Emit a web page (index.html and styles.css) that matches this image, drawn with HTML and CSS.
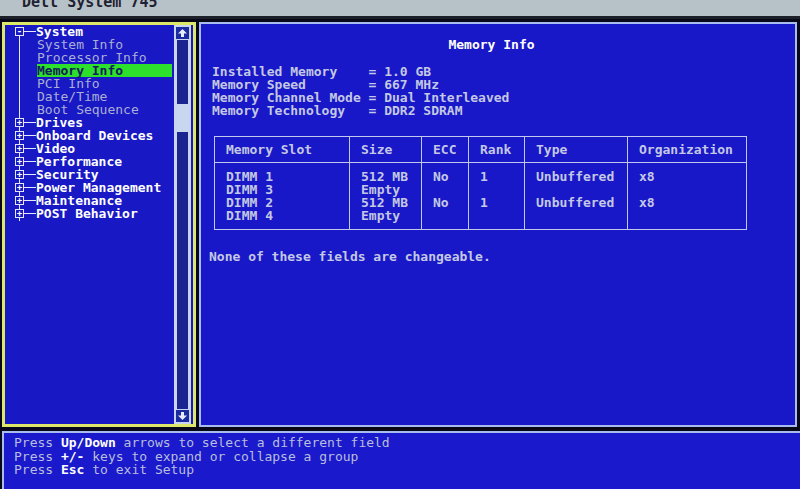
FILE: index.html
```html
<!DOCTYPE html>
<html lang="en">
<head>
    <meta charset="UTF-8">
    <title>Dell System 745 Setup</title>
    <link rel="stylesheet" href="styles.css">
</head>
<body>

<div class="titlebar"><span>Dell System 745</span></div>

<div class="main">
    <div class="left-panel">
        <ul class="tree">
            <li class="group"><span class="box">-</span><b>System</b></li>
            <li class="item"><span>System Info</span></li>
            <li class="item"><span>Processor Info</span></li>
            <li class="item selected"><span>Memory Info</span></li>
            <li class="item"><span>PCI Info</span></li>
            <li class="item"><span>Date/Time</span></li>
            <li class="item"><span>Boot Sequence</span></li>
            <li class="group"><span class="box">+</span><b>Drives</b></li>
            <li class="group"><span class="box">+</span><b>Onboard Devices</b></li>
            <li class="group"><span class="box">+</span><b>Video</b></li>
            <li class="group"><span class="box">+</span><b>Performance</b></li>
            <li class="group"><span class="box">+</span><b>Security</b></li>
            <li class="group"><span class="box">+</span><b>Power Management</b></li>
            <li class="group"><span class="box">+</span><b>Maintenance</b></li>
            <li class="group"><span class="box">+</span><b>POST Behavior</b></li>
        </ul>
        <div class="scrollbar">
            <div class="arrow">
                <svg width="11" height="10" viewBox="0 0 11 10"><path d="M5.5 1 L10 5.5 H7 V9 H4 V5.5 H1 Z" fill="#e8ecff"/></svg>
            </div>
            <div class="track">
                <div class="thumb"></div>
            </div>
            <div class="arrow">
                <svg width="11" height="10" viewBox="0 0 11 10"><path d="M5.5 9 L10 4.5 H7 V1 H4 V4.5 H1 Z" fill="#e8ecff"/></svg>
            </div>
        </div>
    </div>

    <div class="right-panel">
        <h1>Memory Info</h1>
        <pre class="info">Installed Memory    = 1.0 GB
Memory Speed        = 667 MHz
Memory Channel Mode = Dual Interleaved
Memory Technology   = DDR2 SDRAM</pre>

        <table class="slots">
            <tr>
                <th class="c-slot">Memory Slot</th>
                <th class="c-size">Size</th>
                <th class="c-ecc">ECC</th>
                <th class="c-rank">Rank</th>
                <th class="c-type">Type</th>
                <th class="c-org">Organization</th>
            </tr>
            <tr>
                <td>DIMM 1<br>DIMM 3<br>DIMM 2<br>DIMM 4</td>
                <td>512 MB<br>Empty<br>512 MB<br>Empty</td>
                <td>No<br><br>No<br>&nbsp;</td>
                <td>1<br><br>1<br>&nbsp;</td>
                <td>Unbuffered<br><br>Unbuffered<br>&nbsp;</td>
                <td>x8<br><br>x8<br>&nbsp;</td>
            </tr>
        </table>

        <p class="note">None of these fields are changeable.</p>
    </div>
</div>

<div class="help">
    <div>Press <b>Up/Down</b> arrows to select a different field</div>
    <div>Press <b>+/-</b> keys to expand or collapse a group</div>
    <div>Press <b>Esc</b> to exit Setup</div>
</div>

</body>
</html>
```

FILE: styles.css
```css
body {
    margin: 0;
    background: #080818;
    font-family: "DejaVu Sans Mono", "Liberation Mono", monospace;
    font-size: 13px;
    line-height: 13px;
    font-weight: bold;
    color: #c4c8e4;
    overflow: hidden;
}
.titlebar {
    height: 16px;
    background: #b7c1c8;
    border-bottom: 3px solid #1c2028;
    overflow: hidden;
    padding-left: 22px;
}
.titlebar span {
    display: block;
    margin-top: -5px;
    font-size: 15px;
    line-height: 15px;
    color: #1e2230;
}
.main {
    display: flex;
    gap: 3px;
    margin: 3px 3px 0 2px;
    height: 405px;
}
.left-panel {
    width: 188px;
    border: 3px solid #dde86a;
    background: #1818c4;
    display: flex;
    justify-content: space-between;
}
.tree {
    list-style: none;
    margin: 0;
    padding: 0 0 0 10px;
    position: relative;
}
.tree::before {
    content: "";
    position: absolute;
    left: 14px;
    top: 6px;
    height: 190px;
    border-left: 1px solid #e4e8ff;
}
.tree li {
    height: 13px;
    white-space: pre;
}
.group {
    display: flex;
    align-items: center;
    color: #ffffff;
}
.box {
    position: relative;
    width: 7px;
    height: 7px;
    border: 1px solid #e4e8ff;
    background: #1818c4;
    color: #ffffff;
    font-size: 9px;
    line-height: 7px;
    text-align: center;
    margin-right: 12px;
}
.box::after {
    content: "";
    position: absolute;
    left: 8px;
    top: 3px;
    width: 12px;
    border-top: 1px solid #e4e8ff;
}
.item {
    padding-left: 22px;
    color: #aab0d4;
    font-weight: normal;
}
.item span {
    display: block;
    width: 135px;
}
.item.selected span {
    background: #2ce02c;
    color: #10205a;
    font-weight: bold;
}
.scrollbar {
    width: 15px;
    margin: 0 2px 0 0;
    border: 1px solid #c8d4f0;
    display: flex;
    flex-direction: column;
}
.arrow {
    height: 12px;
    display: flex;
    align-items: center;
    justify-content: center;
    border: 1px solid #c8d4f0;
    background: #1b2ba0;
}
.track {
    flex: 1;
    background: #1a2590;
    border-left: 2px solid #c8d4f0;
    border-right: 2px solid #c8d4f0;
    padding-top: 64px;
}
.thumb {
    height: 28px;
    background: #c8d6f0;
}
.right-panel {
    flex: 1;
    border: 2px solid #a8bcf0;
    background: #1818c8;
    padding: 0 0 0 11px;
}
h1 {
    margin: 14px 0 14px 0;
    padding-right: 24px;
    font-size: 13px;
    line-height: 13px;
    text-align: center;
    color: #ffffff;
}
.info {
    margin: 0;
    font: inherit;
    color: #c4c8e4;
}
.slots {
    margin: 19px 0 0 2px;
    border-collapse: collapse;
    border: 1px solid #c0c8f0;
}
.slots th, .slots td {
    border: 1px solid #c0c8f0;
    text-align: left;
    padding: 0 0 0 11px;
    font-weight: bold;
    vertical-align: top;
    color: #c4c8e4;
}
.slots th {
    height: 25px;
    vertical-align: middle;
}
.slots td {
    padding-top: 7px;
    padding-bottom: 7px;
}
.c-slot { width: 123px; }
.c-size { width: 60px; }
.c-ecc { width: 35px; }
.c-rank { width: 44px; }
.c-type { width: 91px; }
.c-org { width: 107px; }
.note {
    margin: 20px 0 0 -3px;
}
.help {
    margin: 4px 0 0 2px;
    height: 60px;
    border-top: 2px solid #a8bcf0;
    border-left: 2px solid #a8bcf0;
    background: #1a1acc;
    padding: 3px 0 0 10px;
    font-weight: normal;
    color: #b8bedc;
}
.help div {
    height: 13.5px;
    white-space: pre;
}
.help b {
    color: #ffffff;
}
```
